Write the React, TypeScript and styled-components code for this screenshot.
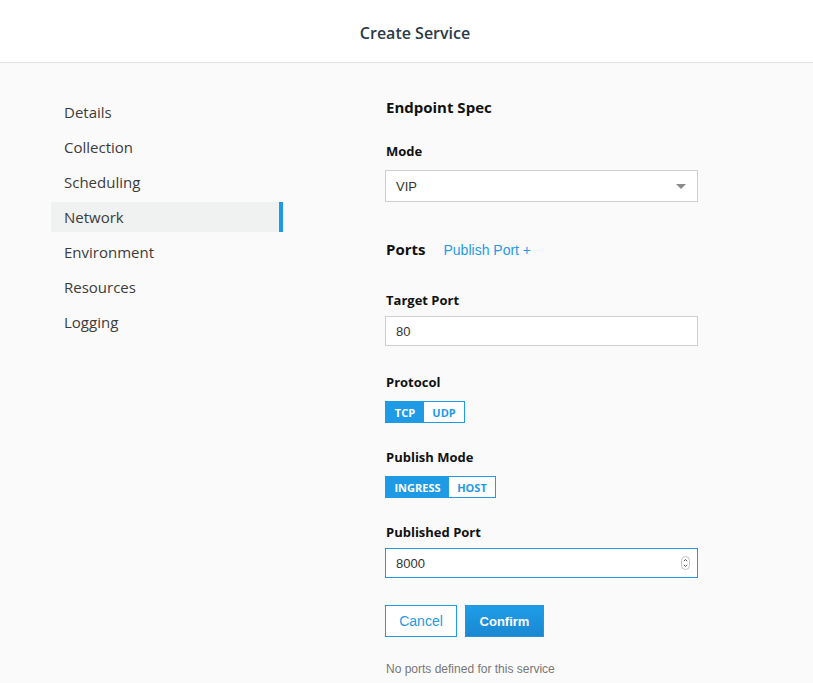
import React from "react";
import styled, { createGlobalStyle } from "styled-components";

const GlobalStyle = createGlobalStyle`
  html, body { margin: 0; padding: 0; background: #fafafa; }
  body { font-family: "Open Sans", "Liberation Sans", sans-serif; color: #333; }
  * { box-sizing: border-box; }
`;

const BLUE = "#1f9ae4";

const Page = styled.div`
  width: 813px;
  min-height: 683px;
  background: #fafafa;
`;

const Header = styled.header`
  height: 63px;
  background: #fff;
  border-bottom: 1px solid #e4e4e4;
  display: flex;
  align-items: center;
  justify-content: center;
  padding-left: 17px;
`;

const Title = styled.h1`
  margin: 0;
  font-size: 16px;
  font-weight: 600;
  color: #2b3a4a;
  padding-top: 4px;
`;

const Body = styled.div`
  display: flex;
  padding-left: 51px;
`;

const Sidebar = styled.nav`
  width: 232px;
  padding-top: 34px;
  display: flex;
  flex-direction: column;
  gap: 5px;
`;

const NavItem = styled.div<{ $active?: boolean }>`
  height: 30px;
  display: flex;
  align-items: center;
  padding-left: 13px;
  font-size: 15px;
  color: #3c3c3c;
  background: ${(p) => (p.$active ? "#f0f1f1" : "transparent")};
  border-right: 4px solid ${(p) => (p.$active ? BLUE : "transparent")};
`;

const Content = styled.main`
  margin-left: 102px;
  width: 313px;
  padding-top: 33px;
  display: flex;
  flex-direction: column;
`;

const SectionRow = styled.div<{ $mt?: number }>`
  display: flex;
  align-items: baseline;
  gap: 18px;
  margin-top: ${(p) => p.$mt ?? 0}px;
  padding-left: 1px;
`;

const SectionTitle = styled.h2`
  margin: 0;
  font-size: 15px;
  line-height: 22px;
  font-weight: 700;
  color: #111;
`;

const LinkText = styled.a`
  font-family: "Liberation Sans", Arial, sans-serif;
  font-size: 14px;
  color: ${BLUE};
  text-decoration: none;
`;

const Label = styled.label<{ $mt: number; $mb: number }>`
  display: block;
  margin-top: ${(p) => p.$mt}px;
  margin-bottom: ${(p) => p.$mb}px;
  padding-left: 1px;
  font-size: 13px;
  line-height: 18px;
  font-weight: 700;
  color: #111;
`;

const SelectBox = styled.div`
  position: relative;
  height: 32px;
  background: #fff;
  border: 1px solid #cfcfcf;
  display: flex;
  align-items: center;
  padding-left: 10px;
  font-family: "Liberation Sans", Arial, sans-serif;
  font-size: 13px;
  color: #333;
`;

const Caret = styled.span`
  position: absolute;
  right: 11px;
  top: 13px;
  width: 0;
  height: 0;
  border-left: 5px solid transparent;
  border-right: 5px solid transparent;
  border-top: 5px solid #8a8a8a;
`;

const InputWrap = styled.div`
  position: relative;
`;

const TextInput = styled.input<{ $focused?: boolean }>`
  display: block;
  width: 100%;
  height: 30px;
  margin: 0;
  background: #fff;
  border: 1px solid ${(p) => (p.$focused ? BLUE : "#cfcfcf")};
  outline: none;
  padding: 0 10px;
  font-family: "Liberation Sans", Arial, sans-serif;
  font-size: 13px;
  color: #333;
`;

const Spinner = styled.svg`
  position: absolute;
  right: 8px;
  top: 8px;
`;

const Toggle = styled.div`
  display: inline-flex;
  align-self: flex-start;
  height: 22px;
  border: 1px solid ${BLUE};
  background: #fff;
`;

const Seg = styled.span<{ $on?: boolean; $w: number }>`
  width: ${(p) => p.$w}px;
  display: flex;
  align-items: center;
  justify-content: center;
  font-size: 11px;
  font-weight: 700;
  color: ${(p) => (p.$on ? "#fff" : BLUE)};
  background: ${(p) => (p.$on ? BLUE : "#fff")};
`;

const Buttons = styled.div`
  display: flex;
  gap: 8px;
  margin-top: 27px;
`;

const Button = styled.button<{ $primary?: boolean }>`
  height: 32px;
  margin: 0;
  padding: 0;
  font-family: "Liberation Sans", Arial, sans-serif;
  cursor: pointer;
  ${(p) =>
    p.$primary
      ? `
    width: 79px;
    font-size: 13px;
    font-weight: 700;
    color: #fff;
    border: 1px solid #2a95da;
    background: linear-gradient(#1f9de8, #1a88d2);
  `
      : `
    width: 72px;
    font-size: 14px;
    color: ${BLUE};
    border: 1px solid ${BLUE};
    background: #fff;
  `}
`;

const Note = styled.p`
  margin: 24px 0 0;
  padding-left: 1px;
  font-family: "Liberation Sans", Arial, sans-serif;
  font-size: 12px;
  line-height: 16px;
  color: #777;
`;

const navItems = ["Details", "Collection", "Scheduling", "Network", "Environment", "Resources", "Logging"];

export default function App() {
  return (
    <Page>
      <GlobalStyle />
      <Header>
        <Title>Create Service</Title>
      </Header>
      <Body>
        <Sidebar>
          {navItems.map((n) => (
            <NavItem key={n} $active={n === "Network"}>
              {n}
            </NavItem>
          ))}
        </Sidebar>
        <Content>
          <SectionRow>
            <SectionTitle>Endpoint Spec</SectionTitle>
          </SectionRow>
          <Label $mt={24} $mb={10}>Mode</Label>
          <SelectBox>
            VIP
            <Caret />
          </SelectBox>

          <SectionRow $mt={36}>
            <SectionTitle>Ports</SectionTitle>
            <LinkText href="#">Publish Port +</LinkText>
          </SectionRow>

          <Label $mt={31} $mb={7}>Target Port</Label>
          <TextInput defaultValue="80" readOnly />

          <Label $mt={27} $mb={10}>Protocol</Label>
          <Toggle>
            <Seg $on $w={38}>TCP</Seg>
            <Seg $w={40}>UDP</Seg>
          </Toggle>

          <Label $mt={25} $mb={10}>Publish Mode</Label>
          <Toggle>
            <Seg $on $w={63}>INGRESS</Seg>
            <Seg $w={46}>HOST</Seg>
          </Toggle>

          <Label $mt={25} $mb={7}>Published Port</Label>
          <InputWrap>
            <TextInput defaultValue="8000" readOnly $focused />
            <Spinner width="9" height="14" viewBox="0 0 9 14">
              <rect x="0.5" y="0.5" width="8" height="13" rx="4" fill="#fff" stroke="#c4c4c4" />
              <path d="M2.8 5.2 L4.5 3.5 L6.2 5.2" fill="none" stroke="#555" strokeWidth="1" />
              <path d="M2.8 8.8 L4.5 10.5 L6.2 8.8" fill="none" stroke="#555" strokeWidth="1" />
            </Spinner>
          </InputWrap>

          <Buttons>
            <Button>Cancel</Button>
            <Button $primary>Confirm</Button>
          </Buttons>

          <Note>No ports defined for this service</Note>
        </Content>
      </Body>
    </Page>
  );
}
